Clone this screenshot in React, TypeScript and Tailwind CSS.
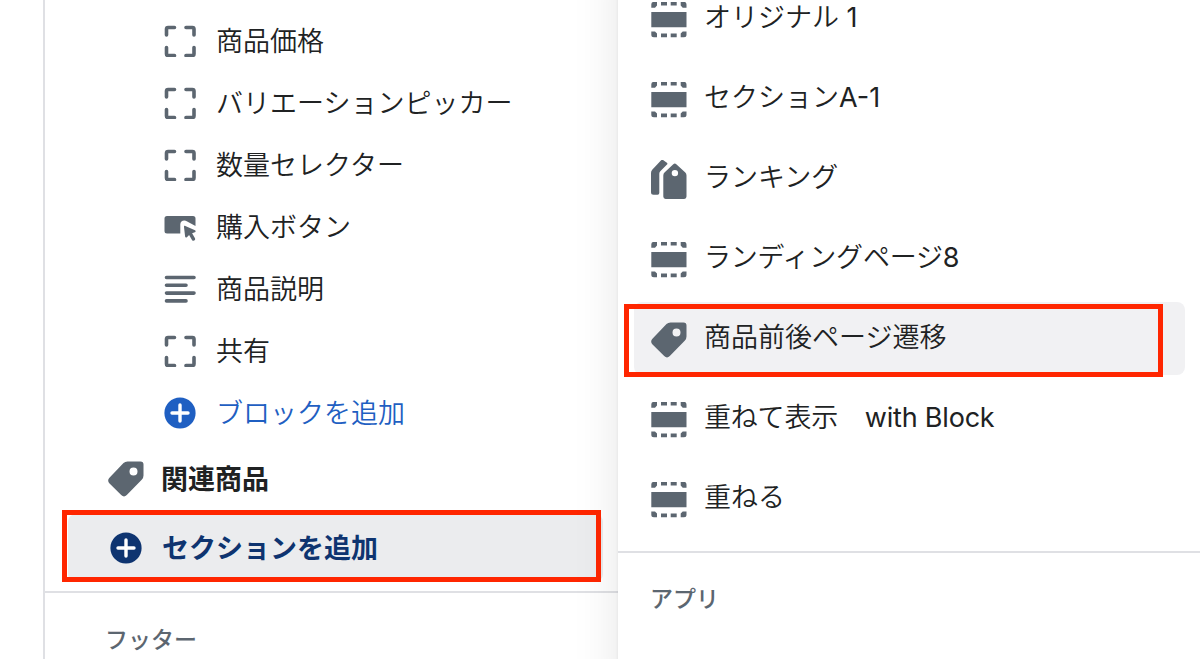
import type { ReactNode } from 'react';

const FONT = "font-[Inter,'Noto_Sans_CJK_JP',sans-serif]";

function BlockIcon() {
  return (
    <svg width="32" height="32" viewBox="0 0 32 32" fill="none" stroke="currentColor" strokeWidth="3.6" strokeLinecap="round" strokeLinejoin="round">
      <path d="M2.500 10V4.100Q2.500 2.500 4.100 2.500H10.500M22 2.500h6.400q1.600 0 1.600 1.600V10M30 22.500v6.400q0 1.600-1.600 1.600H22M10.500 30.500H4.100Q2.500 30.500 2.500 28.900V22.500" />
    </svg>
  );
}

function ButtonIcon() {
  return (
    <svg width="32" height="32" viewBox="0 0 32 32" fill="currentColor">
      <path d="M3 5h26a2.500 2.500 0 0 1 2.500 2.500v7.500l-8.300-4.600c-3.200-1.800-6.900-.5-6.900 3.100V22.500H3A2.500 2.500 0 0 1 .5 20V7.500A2.500 2.500 0 0 1 3 5z" />
      <path d="M21.300 15l9.700 4.200c1 .500.8 1.700-.2 2l-2.700 1 2.900 5c1 2-1.900 3.600-3 1.700l-2.900-5-2.200 2.300c-.8.700-1.700.3-1.800-.7l-1.100-9.400c-.1-1 .5-1.500 1.300-1.100z" />
    </svg>
  );
}

function TextIcon() {
  return (
    <svg width="32" height="32" viewBox="0 0 32 32" stroke="currentColor" strokeWidth="3.6" strokeLinecap="round">
      <path d="M2.500 4.500h27.500M2.500 12.300h19.500M2.500 20.100h27.500M2.500 27.900h19.500" />
    </svg>
  );
}

function PlusIcon() {
  return (
    <svg width="32" height="32" viewBox="0 0 32 32">
      <circle cx="16" cy="16" r="15.600" fill="currentColor" />
      <path d="M16 8v16M8 16h16" stroke="#fff" strokeWidth="3.4" strokeLinecap="round" />
    </svg>
  );
}

function TagIcon() {
  return (
    <svg width="36" height="36" viewBox="0 -.4 36 36" fill="currentColor">
      <path
        fillRule="evenodd"
        d="M19.500 0H32.500Q35.500 0 35.500 3V14Q35.500 16.500 33.700 18.300L18.800 33.700Q16 36.400 13.200 33.700L1.300 21.800Q-.9 19 1.200 16.500L15.500 1.700Q17.200 0 19.500 0zM25.500 6a4 4 0 1 0 0 8a4 4 0 0 0 0-8z"
      />
    </svg>
  );
}

function TagsIcon() {
  return (
    <svg width="36" height="40" viewBox="0 .4 36 40" fill="currentColor">
      <path d="M9.900.900Q11.300-.500 12.700.800L15.900 3.200Q16.900 4 16 4.900L9.500 11.400Q8.300 12.600 8.300 14.200V33.500Q8.300 35.200 6.600 35.200H2.500Q0 35.200 0 32.700V13.500Q0 11.600 1.200 10.200z" />
      <path
        fillRule="evenodd"
        d="M22.300 4.600Q23.800 3.200 25.300 4.600L34.300 13Q35.500 14.200 35.500 16V37Q35.500 39.300 33.200 39.300H14.600Q12.300 39.300 12.300 37V16Q12.300 14.200 13.500 13zM23.900 10.300a3.200 3.200 0 1 0 0 6.400a3.200 3.200 0 0 0 0-6.400z"
      />
    </svg>
  );
}

function SectionIcon() {
  return (
    <svg width="36" height="36" viewBox="0 .4 36 36" fill="currentColor">
      <path d="M.3 10.300h35.200v15.400H.3z" />
      <path d="M10 .300h6v3.700h-6zM19.700.300h6v3.700h-6zM10 32h6v3.700h-6zM19.700 32h6v3.700h-6z" />
      <path d="M.3 6.200V2.800Q.3.300 2.800.300H6V4L4 6.200zM35.500 6.200V2.800Q35.500.300 33 .300H29.700V4L31.700 6.200zM.3 29.800V33.200Q.3 35.700 2.800 35.700H6V32L4 29.800zM35.500 29.800V33.200Q35.500 35.700 33 35.700H29.700V32L31.700 29.800z" />
    </svg>
  );
}

const blocks: { label: string; icon: ReactNode }[] = [
  { label: '商品価格', icon: <BlockIcon /> },
  { label: 'バリエーションピッカー', icon: <BlockIcon /> },
  { label: '数量セレクター', icon: <BlockIcon /> },
  { label: '購入ボタン', icon: <ButtonIcon /> },
  { label: '商品説明', icon: <TextIcon /> },
  { label: '共有', icon: <BlockIcon /> },
];

// latin is the trailing part of the name, set slightly heavier than the kana
const sections: { label: string; latin?: string; icon: ReactNode; active?: boolean; tight?: boolean }[] = [
  { label: 'オリジナル', latin: ' 1', icon: <SectionIcon /> },
  { label: 'セクション', latin: 'A-1', icon: <SectionIcon /> },
  { label: 'ランキング', icon: <TagsIcon /> },
  { label: 'ランディングページ', latin: '8', icon: <SectionIcon />, tight: true },
  { label: '商品前後ページ遷移', icon: <TagIcon />, active: true },
  { label: '重ねて表示　', latin: 'with Block', icon: <SectionIcon />, tight: true },
  { label: '重ねる', icon: <SectionIcon /> },
];

function Sidebar() {
  return (
    <aside className="ml-[43px] w-[575px] shrink-0 border-l-2 border-[#dfe0e4] pt-[10px]">
      <ul className="pl-[119px]">
        {blocks.map((block) => (
          <li key={block.label} className="flex h-[62px] items-center gap-5 font-[350]">
            <span className="text-[#5c6670]">{block.icon}</span>
            <span className="pt-px leading-none">{block.label}</span>
          </li>
        ))}
        <li className="flex h-[62px] items-center gap-5 font-[350] text-[#1f5fc2]">
          <PlusIcon />
          <span className="pt-px leading-none">ブロックを追加</span>
        </li>
      </ul>
      <div className="flex h-[70px] items-center gap-[17px] pl-[63px] font-semibold">
        <span className="text-[#5c6670]"><TagIcon /></span>
        <span className="leading-none">関連商品</span>
      </div>
      <div className="relative ml-[23px] flex h-[68px] w-[535px] items-center gap-5 rounded-lg bg-[#ebecee] pl-[42px] font-semibold text-[#0e3470]">
        <PlusIcon />
        <span className="leading-none">セクションを追加</span>
        <div className="absolute -left-[6px] -top-[4px] h-[72px] w-[539px] border-[5px] border-[#ff2600]" />
      </div>
      <div className="mt-[9px] border-t-2 border-[#dfe0e4] pl-[60px] pt-[36px] text-[23px] font-medium leading-none text-[#5c6670]">
        フッター
      </div>
    </aside>
  );
}

function SectionPicker() {
  return (
    <main className="relative -my-12 flex-1 bg-white py-12 shadow-[0_0_3px_rgba(0,0,0,0.08),0_0_44px_rgba(0,0,0,0.10)]">
      <ul className="-mt-[22px] pl-4">
        {sections.map((section) => (
          <li key={section.label} className="flex h-20 items-center">
            <div
              className={`relative flex h-[73px] w-[551px] items-center gap-[17px] rounded-lg pl-[17px] font-[350] ${
                section.active ? 'bg-[#f1f1f3]' : ''
              }`}
            >
              <span className="pt-[3px] text-[#5c6670]">{section.icon}</span>
              <span className={`whitespace-pre pb-px leading-none ${section.tight ? 'tracking-[-0.2px]' : ''}`}>
                {section.label}
                {section.latin && <span className="font-normal">{section.latin}</span>}
              </span>
              {section.active && (
                <div className="absolute -left-[10px] top-[2px] h-[73px] w-[539px] border-[5px] border-[#ff2600]" />
              )}
            </div>
          </li>
        ))}
      </ul>
      <div className="mt-[13px] border-t-2 border-[#dfe0e4] pl-8 pt-[35px] text-[23px] font-medium leading-none text-[#5c6670]">
        アプリ
      </div>
    </main>
  );
}

export default function App() {
  return (
    <div lang="ja" className={`${FONT} flex h-[659px] w-[1200px] overflow-hidden bg-white text-[27px] text-[#202223]`}>
      <Sidebar />
      <SectionPicker />
    </div>
  );
}
